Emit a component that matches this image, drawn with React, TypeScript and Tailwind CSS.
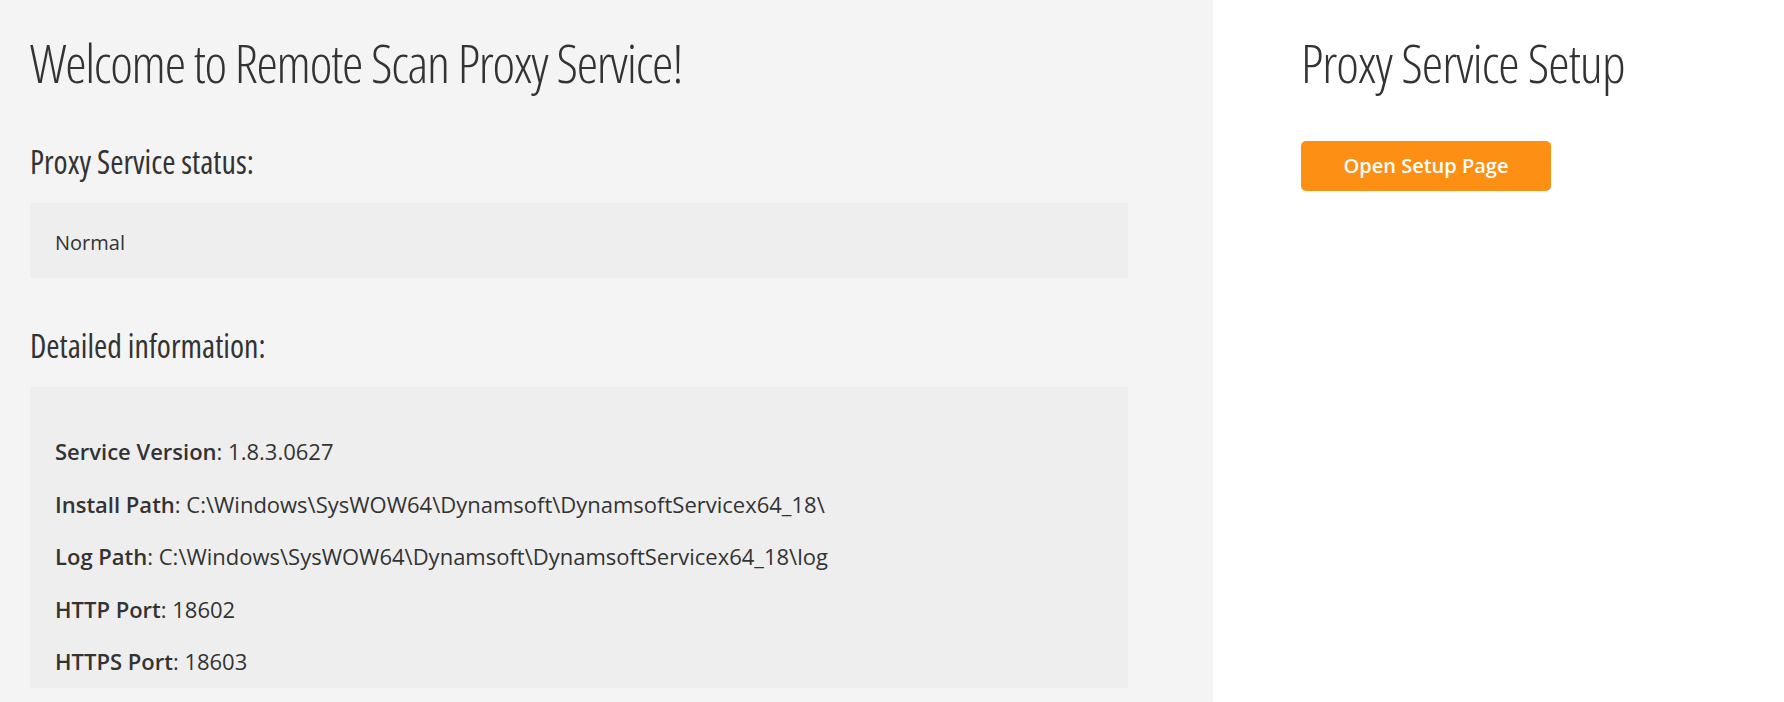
const details = [
  { label: "Service Version", value: "1.8.3.0627" },
  { label: "Install Path", value: "C:\\Windows\\SysWOW64\\Dynamsoft\\DynamsoftServicex64_18\\" },
  { label: "Log Path", value: "C:\\Windows\\SysWOW64\\Dynamsoft\\DynamsoftServicex64_18\\log" },
  { label: "HTTP Port", value: "18602" },
  { label: "HTTPS Port", value: "18603" },
];

const titleClass =
  "font-['Open_Sans',sans-serif] text-[54px] font-light leading-[64px] font-stretch-condensed text-[#333]";

function SectionTitle({ children }: { children: React.ReactNode }) {
  return (
    <h2 className="font-['Open_Sans',sans-serif] text-[32px] font-normal leading-[40px] font-stretch-condensed text-[#333]">
      {children}
    </h2>
  );
}

export default function App() {
  return (
    <div className="flex min-h-screen font-['Open_Sans',sans-serif] text-[#333]">
      <main className="w-[1213px] shrink-0 bg-[#f4f4f4] pl-[30px] pt-[30px] pb-[15px]">
        <h1 className={`${titleClass} tracking-[-1.25px]`}>Welcome to Remote Scan Proxy Service!</h1>

        <div className="mt-[48px]">
          <SectionTitle>Proxy Service status:</SectionTitle>
          <div className="mt-[21px] h-[75px] w-[1098px] bg-[#eeeeee] px-[25px] pt-[25px]">
            <p className="text-[20px] leading-[30px]">Normal</p>
          </div>
        </div>

        <div className="mt-[48px]">
          <SectionTitle>Detailed information:</SectionTitle>
          <div className="mt-[21px] flex w-[1098px] flex-col gap-[19.5px] bg-[#eeeeee] px-[25px] pt-[48px] pb-[10px]">
            {details.map((d) => (
              <p key={d.label} className="text-[22px] leading-[33px]">
                <span className="font-semibold">{d.label}</span>: {d.value}
              </p>
            ))}
          </div>
        </div>
      </main>

      <aside className="flex-1 bg-white pl-[88px] pt-[30px]">
        <h1 className={`${titleClass} tracking-[-1px]`}>Proxy Service Setup</h1>
        <button
          type="button"
          className="mt-[47px] flex h-[50px] w-[250px] items-center justify-center rounded-[5px] bg-[#fd8f14] text-[20px] font-semibold text-white"
        >
          Open Setup Page
        </button>
      </aside>
    </div>
  );
}
